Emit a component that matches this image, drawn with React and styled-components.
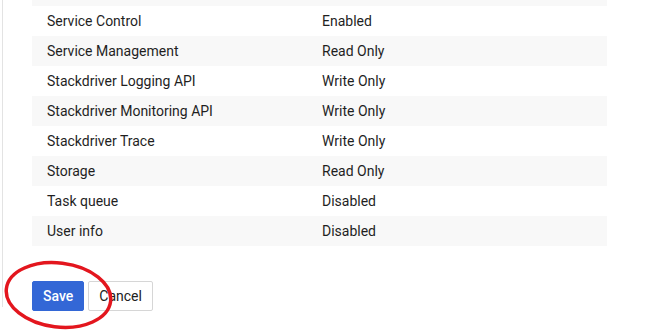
import React from "react";
import styled, { createGlobalStyle } from "styled-components";

const GlobalStyle = createGlobalStyle`
  html, body {
    margin: 0;
    padding: 0;
    background: #ffffff;
  }
  body {
    font-family: Roboto, "Noto Sans", Arial, sans-serif;
    color: #202124;
  }
`;

const Page = styled.div`
  position: relative;
  width: 649px;
  height: 331px;
  padding-left: 2px;
  box-sizing: border-box;
  overflow: hidden;
`;

const Panel = styled.div`
  height: 100%;
  border-left: 1px solid #e3e3e3;
  padding-left: 29px;
  box-sizing: border-box;
`;

const Scopes = styled.div`
  width: 575px;
  margin-top: -24px;
`;

const ScopeRow = styled.div`
  display: grid;
  grid-template-columns: 275px 1fr;
  height: 30px;
  align-items: center;
  padding-left: 15px;
  font-size: 14px;
  color: #1f1f1f;
  background: ${(p) => (p.$striped ? "#f8f8f8" : "#ffffff")};
`;

const Actions = styled.div`
  display: flex;
  gap: 4px;
  margin-top: 35px;
`;

const Button = styled.button`
  height: 30px;
  padding: 0 10px;
  font-family: Roboto, Arial, sans-serif;
  font-size: 14px;
  font-weight: ${(p) => (p.$primary ? 500 : 400)};
  border-radius: 2px;
  border: 1px solid ${(p) => (p.$primary ? "#3367d6" : "#d6d6d6")};
  background: ${(p) => (p.$primary ? "#3367d6" : "#ffffff")};
  color: ${(p) => (p.$primary ? "#ffffff" : "#212121")};
  cursor: pointer;
`;

const Annotation = styled.svg`
  position: absolute;
  left: 0;
  top: 250px;
  pointer-events: none;
`;

const scopes = [
  ["", ""],
  ["Service Control", "Enabled"],
  ["Service Management", "Read Only"],
  ["Stackdriver Logging API", "Write Only"],
  ["Stackdriver Monitoring API", "Write Only"],
  ["Stackdriver Trace", "Write Only"],
  ["Storage", "Read Only"],
  ["Task queue", "Disabled"],
  ["User info", "Disabled"],
];

export default function App() {
  return (
    <>
      <GlobalStyle />
      <Page>
        <Panel>
          <Scopes>
            {scopes.map(([name, access], i) => (
              <ScopeRow key={i} $striped={i % 2 === 0}>
                <span>{name}</span>
                <span>{access}</span>
              </ScopeRow>
            ))}
          </Scopes>
          <Actions>
            <Button $primary>Save</Button>
            <Button>Cancel</Button>
          </Actions>
        </Panel>
        <Annotation width="130" height="81" viewBox="0 0 130 81">
          <ellipse
            cx="58.5"
            cy="45"
            rx="52.5"
            ry="32"
            transform="rotate(7 58.5 45)"
            fill="none"
            stroke="#e3161e"
            strokeWidth="3.5"
          />
        </Annotation>
      </Page>
    </>
  );
}
